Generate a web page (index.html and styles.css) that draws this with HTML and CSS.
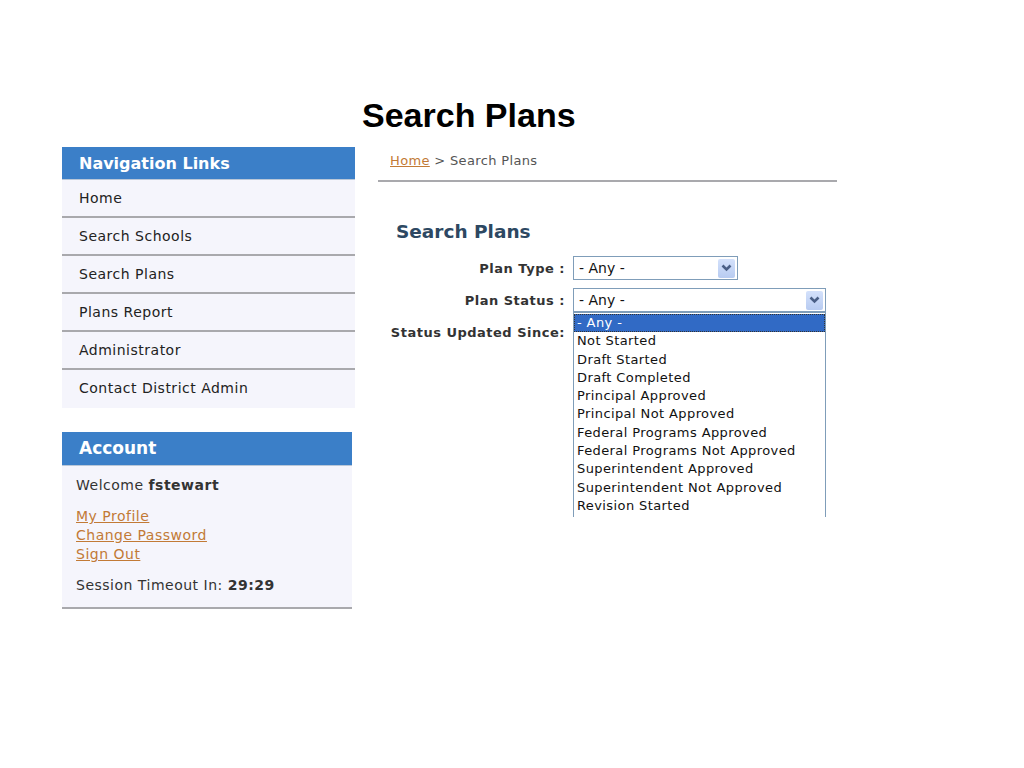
FILE: index.html
```html
<!DOCTYPE html>
<html lang="en">

<head>
    <meta charset="UTF-8">
    <title>Search Plans</title>
    <link rel="stylesheet" href="styles.css">
</head>

<body>

    <h1 class="page-title">Search Plans</h1>

    <div class="layout">
        <!-- Sidebar -->
        <aside class="sidebar">
            <div class="panel nav-panel">
                <h2 class="panel-head">Navigation Links</h2>
                <ul class="nav-list">
                    <li>Home</li>
                    <li>Search Schools</li>
                    <li>Search Plans</li>
                    <li>Plans Report</li>
                    <li>Administrator</li>
                    <li>Contact District Admin</li>
                </ul>
            </div>

            <div class="panel account-panel">
                <h2 class="panel-head">Account</h2>
                <div class="account-body">
                    <p class="welcome">Welcome <b>fstewart</b></p>
                    <div class="account-links">
                        <a href="#">My Profile</a>
                        <a href="#">Change Password</a>
                        <a href="#">Sign Out</a>
                    </div>
                    <p class="timeout">Session Timeout In: <b>29:29</b></p>
                </div>
            </div>
        </aside>

        <!-- Main content -->
        <main class="content">
            <div class="breadcrumb"><a href="#">Home</a> &gt; Search Plans</div>

            <h2 class="section-title">Search Plans</h2>

            <div class="search-form">
                <div class="form-row">
                    <span class="form-label">Plan Type :</span>
                    <div class="select-box select-short">
                        <span class="select-value">- Any -</span>
                        <span class="select-btn">
                            <svg width="11" height="8" viewBox="0 0 11 8"><path d="M1.5 1.5 L5.5 5.5 L9.5 1.5" fill="none" stroke="#4a5f86" stroke-width="2.6"/></svg>
                        </span>
                    </div>
                </div>
                <div class="form-row">
                    <span class="form-label">Plan Status :</span>
                    <div class="select-box select-long">
                        <span class="select-value">- Any -</span>
                        <span class="select-btn">
                            <svg width="11" height="8" viewBox="0 0 11 8"><path d="M1.5 1.5 L5.5 5.5 L9.5 1.5" fill="none" stroke="#4a5f86" stroke-width="2.6"/></svg>
                        </span>
                        <ul class="dropdown">
                            <li class="selected">- Any -</li>
                            <li>Not Started</li>
                            <li>Draft Started</li>
                            <li>Draft Completed</li>
                            <li>Principal Approved</li>
                            <li>Principal Not Approved</li>
                            <li>Federal Programs Approved</li>
                            <li>Federal Programs Not Approved</li>
                            <li>Superintendent Approved</li>
                            <li>Superintendent Not Approved</li>
                            <li>Revision Started</li>
                        </ul>
                    </div>
                </div>
                <div class="form-row">
                    <span class="form-label">Status Updated Since:</span>
                </div>
            </div>
        </main>
    </div>

</body>

</html>
```

FILE: styles.css
```css
/* Global Styles */
* {
    margin: 0;
    padding: 0;
    box-sizing: border-box;
}

body {
    font-family: 'DejaVu Sans', Verdana, sans-serif;
    background-color: #fff;
    color: #333;
    font-size: 13px;
}

a {
    color: #c27a36;
}

ul {
    list-style: none;
}

/* Page Title */
.page-title {
    font-family: 'Liberation Sans', Arial, sans-serif;
    font-size: 34px;
    font-weight: bold;
    color: #000;
    margin: 95px 0 0 362px;
    line-height: 40px;
}

.layout {
    display: flex;
    align-items: flex-start;
    gap: 23px;
    margin: 12px 0 0 62px;
}

/* Sidebar */
.sidebar {
    width: 293px;
    display: flex;
    flex-direction: column;
    gap: 24px;
}

.panel {
    background-color: #f5f5fc;
}

.panel-head {
    background-color: #3b7fc8;
    color: #fff;
    font-size: 16px;
    font-weight: bold;
    height: 33px;
    line-height: 33px;
    padding-left: 17px;
    border-bottom: 1px solid #b9c7d8;
}

.nav-list li {
    height: 38px;
    line-height: 36px;
    padding-left: 17px;
    color: #222;
    font-size: 14px;
    letter-spacing: 0.5px;
    border-bottom: 2px solid #a9a9ad;
}

.nav-list li:last-child {
    border-bottom: none;
}

.account-panel {
    width: 290px;
    border-bottom: 2px solid #a9a9ad;
}

.account-panel .panel-head {
    height: 34px;
    line-height: 33px;
    font-size: 17px;
}

.account-body {
    padding: 10px 14px 12px;
    font-size: 14px;
    letter-spacing: 0.5px;
    line-height: 19px;
    color: #333;
}

.account-links {
    display: flex;
    flex-direction: column;
    margin-top: 12px;
}

.timeout {
    margin-top: 12px;
}

/* Content */
.content {
    width: 459px;
}

.breadcrumb {
    font-size: 13px;
    letter-spacing: 0.35px;
    color: #555;
    padding: 6px 0 12px 12px;
    border-bottom: 2px solid #a9a9ad;
}

.section-title {
    font-size: 18.5px;
    color: #2d4862;
    font-weight: bold;
    margin: 39px 0 0 18px;
}

.search-form {
    display: flex;
    flex-direction: column;
    gap: 8px;
    margin-top: 14px;
    margin-left: 7px;
}

.form-row {
    display: flex;
    align-items: center;
    gap: 8px;
    min-height: 24px;
}

.form-label {
    width: 180px;
    text-align: right;
    white-space: nowrap;
    font-weight: bold;
    font-size: 13px;
    letter-spacing: 0.5px;
    color: #333;
}

/* Fake select */
.select-box {
    position: relative;
    height: 24px;
    border: 1px solid #7f9db9;
    background-color: #fff;
    display: flex;
    align-items: center;
    justify-content: space-between;
    padding: 0 2px 0 5px;
    font-size: 14px;
    color: #111;
}

.select-short {
    width: 165px;
}

.select-long {
    width: 253px;
}

.select-btn {
    width: 17px;
    height: 19px;
    border-radius: 2px;
    background: linear-gradient(#d4e1fb, #b7cbf1);
    display: flex;
    align-items: center;
    justify-content: center;
}

.dropdown {
    position: absolute;
    top: 23px;
    left: -1px;
    width: 253px;
    background-color: #fff;
    border: 1px solid #7f9db9;
    border-bottom: none;
    padding-top: 1px;
    padding-bottom: 2px;
    z-index: 2;
    font-size: 13px;
    letter-spacing: 0.4px;
}

.dropdown li {
    height: 18.3px;
    line-height: 18px;
    padding-left: 3px;
    color: #111;
    white-space: nowrap;
}

.dropdown li.selected {
    background-color: #316ac5;
    color: #fff;
    outline: 1px dotted #333;
    outline-offset: -1px;
}
```
